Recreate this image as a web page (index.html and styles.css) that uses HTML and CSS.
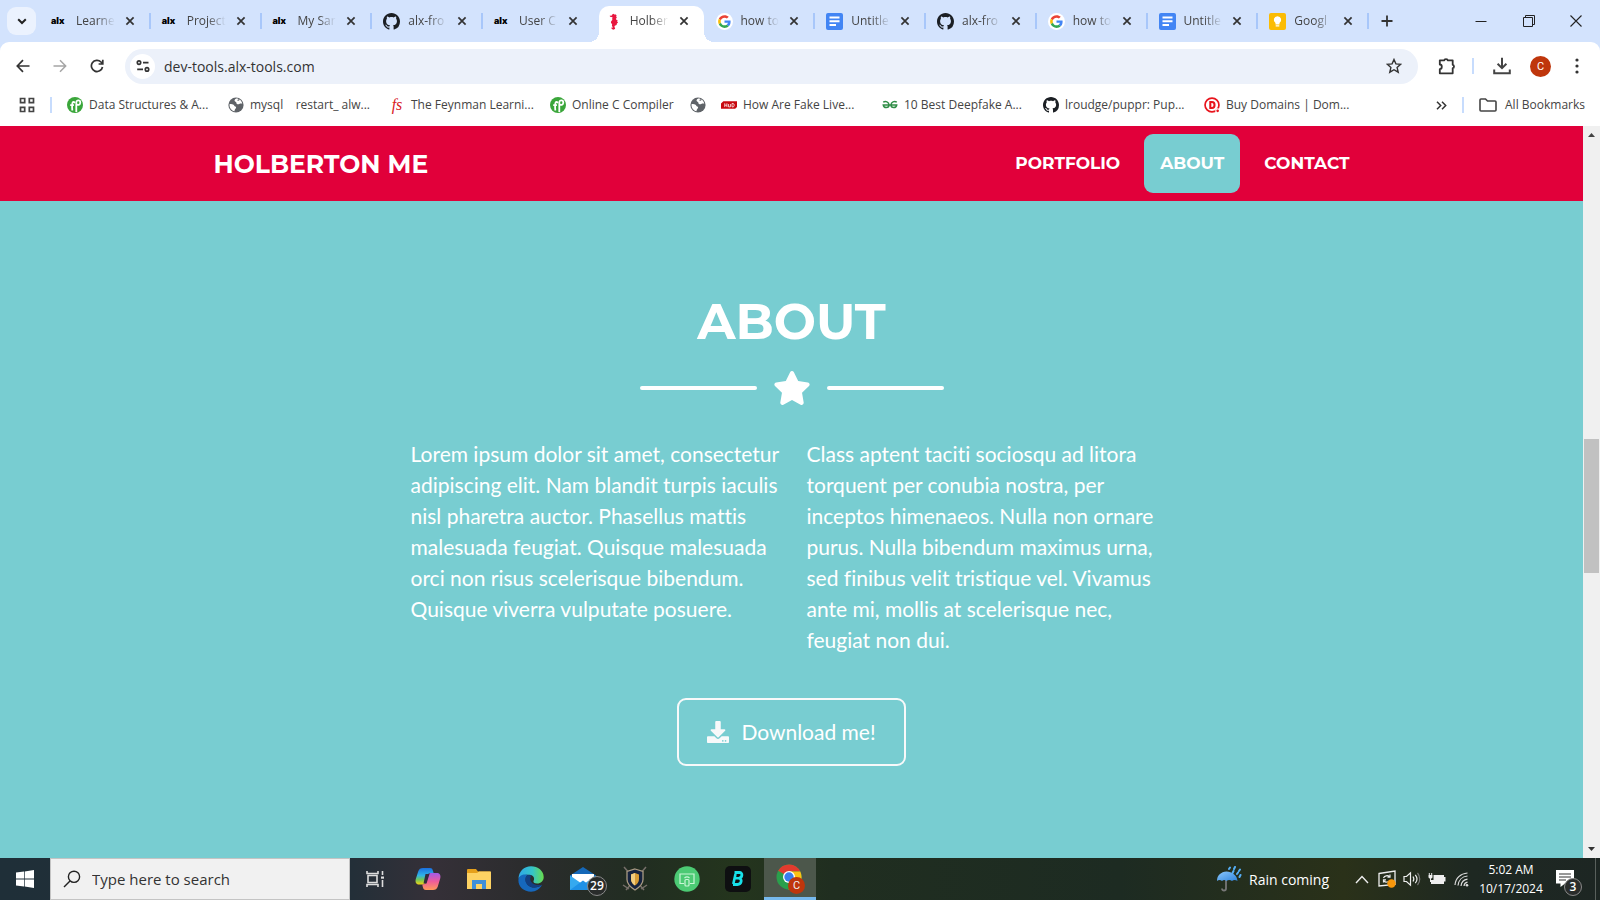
FILE: index.html
```html
<!DOCTYPE html>
<html lang="en">
<head>
<meta charset="utf-8">
<meta name="viewport" content="width=device-width, initial-scale=1">
<title>Holberton Me</title>
<link rel="stylesheet" href="styles.css">
</head>
<body>
<svg class="sprite" aria-hidden="true">
  <defs>
    <linearGradient id="g-cop1" x1="0" y1="0" x2="0" y2="1"><stop offset="0" stop-color="#1b6fe0"/><stop offset=".45" stop-color="#2fb3e8"/><stop offset=".7" stop-color="#6fc65a"/><stop offset="1" stop-color="#f2d313"/></linearGradient>
    <linearGradient id="g-cop2" x1="0" y1="0" x2="0" y2="1"><stop offset="0" stop-color="#a25be8"/><stop offset=".5" stop-color="#ee5c9a"/><stop offset="1" stop-color="#ff9a5a"/></linearGradient>
    <linearGradient id="g-edge" x1="0" y1="0" x2="1" y2="0"><stop offset="0" stop-color="#2fa8e8"/><stop offset=".55" stop-color="#35c4c9"/><stop offset="1" stop-color="#68dc4c"/></linearGradient>
    <linearGradient id="g-umb" x1="0" y1="0" x2="1" y2="1"><stop offset="0" stop-color="#8cc8fb"/><stop offset="1" stop-color="#2f84dc"/></linearGradient>
  </defs>
  <symbol id="i-close" viewBox="0 0 10 10"><path d="M1.4 1.4l7.2 7.2M8.6 1.4L1.4 8.6" fill="none" stroke="#333" stroke-width="1.7"/></symbol>
  <symbol id="i-github" viewBox="0 0 16 16"><path fill="#1b1f24" d="M8 0C3.58 0 0 3.58 0 8c0 3.54 2.29 6.53 5.47 7.59.4.07.55-.17.55-.38 0-.19-.01-.82-.01-1.49-2.01.37-2.53-.49-2.69-.94-.09-.23-.48-.94-.82-1.13-.28-.15-.68-.52-.01-.53.63-.01 1.08.58 1.23.82.72 1.21 1.87.87 2.33.66.07-.52.28-.87.51-1.07-1.78-.2-3.64-.89-3.64-3.95 0-.87.31-1.59.82-2.15-.08-.2-.36-1.02.08-2.12 0 0 .67-.21 2.2.82.64-.18 1.32-.27 2-.27s1.36.09 2 .27c1.53-1.04 2.2-.82 2.2-.82.44 1.1.16 1.92.08 2.12.51.56.82 1.27.82 2.15 0 3.07-1.87 3.75-3.65 3.95.29.25.54.73.54 1.48 0 1.07-.01 1.93-.01 2.2 0 .21.15.46.55.38A8.01 8.01 0 0 0 16 8c0-4.42-3.58-8-8-8z"/></symbol>
  <symbol id="i-google" viewBox="0 0 64 64"><circle cx="32" cy="32" r="32" fill="#fff"/><g transform="translate(8 8)"><path fill="#EA4335" d="M24 9.5c3.54 0 6.71 1.22 9.21 3.6l6.85-6.85C35.9 2.38 30.47 0 24 0 14.62 0 6.51 5.38 2.56 13.22l7.98 6.19C12.43 13.72 17.74 9.5 24 9.5z"/><path fill="#4285F4" d="M46.98 24.55c0-1.57-.15-3.09-.38-4.55H24v9.02h12.94c-.58 2.96-2.26 5.48-4.78 7.18l7.73 6c4.51-4.18 7.09-10.36 7.09-17.65z"/><path fill="#FBBC05" d="M10.53 28.59c-.48-1.45-.76-2.99-.76-4.59s.27-3.14.76-4.59l-7.98-6.19C.92 16.46 0 20.12 0 24c0 3.88.92 7.54 2.56 10.78l7.97-6.19z"/><path fill="#34A853" d="M24 48c6.48 0 11.93-2.13 15.89-5.81l-7.73-6c-2.15 1.45-4.92 2.3-8.16 2.3-6.26 0-11.57-4.22-13.47-9.91l-7.98 6.19C6.51 42.62 14.62 48 24 48z"/></g></symbol>
  <symbol id="i-docs" viewBox="0 0 17 17"><rect width="17" height="17" rx="2" fill="#4285f4"/><path d="M3.5 4.5h10M3.5 8.2h10M3.5 12h6.5" stroke="#fff" stroke-width="1.9"/></symbol>
  <symbol id="i-keep" viewBox="0 0 17 17"><rect width="17" height="17" rx="2" fill="#fbbc04"/><path d="M8.5 3.2a3.7 3.7 0 0 0-2 6.8v1.5h4V10a3.7 3.7 0 0 0-2-6.8zM6.7 12.2h3.6v1.2H6.7z" fill="#fff"/></symbol>
  <symbol id="i-horse" viewBox="0 0 12 16"><path fill="#e8173f" d="M4.5 1.6L6 .6l.8.7 1.500.2.7 1.300-.6.6.8 1.100-1 .8.7 1.200 1.100.6-.6.9.9 1-1.100.9-.3 1.300-1.700.7-.4 1.200.8.9-.3 1.100-1.600.6-1.500-.8-.2-1.300 1 .3.3-.6-.8-1.200.2-1.500-1.100-1.400.2-1.500 1.100-1-.1-1.900.4-.8-2.400-.5-.4-.9 2.200-.3z"/></symbol>
  <symbol id="i-globe" viewBox="0 0 16 16"><circle cx="8" cy="8" r="7.6" fill="#5f6368"/><path d="M1.500 7.200c2.300-.6 4.300.2 4.800 1.600.3 1 1.700.5 1.800 1.700 0 1.300-1.400 1-1.600 3.800C3.700 13.700 1.300 11 1.500 7.200zM8.200 1.600c-1.900.8-2.300 2.600-.7 3.200 1.500.5.3 2.200 1.900 2.500 1.500.3 2.400-1.200 4.800-.6-.3-2.700-2.800-5.100-6-5.100z" fill="#fff"/><path d="M9.600 3.600l1.800-1M9 11.500l2-1.300 1.300 1.200" stroke="#5f6368" stroke-width="1.200" fill="none"/></symbol>
  <symbol id="i-pro" viewBox="0 0 16 16"><circle cx="8" cy="8" r="8" fill="#3aa63a"/><path d="M5.300 13.500c-.3-3-.1-6 .1-7.300.3-2 2.500-1.500 1.700-.1M3.200 8.200h3.700M9.300 15V5.300c0-2.600 4-2.600 4 .2 0 2.500-2.600 3-4 1.800" fill="none" stroke="#fff" stroke-width="1.800"/></symbol>
  <symbol id="i-hud" viewBox="0 0 17 10"><path d="M2.500 1H17v6l-2 2H0V3.500z" fill="#c8090f"/><path d="M4 3.200v4M4 5.200h2.300M6.300 3.200v4M8 4v3h2V4M11.700 3.400v3.600h1.200c1.500 0 1.500-3.600 0-3.600z" fill="none" stroke="#fff" stroke-width=".8"/></symbol>
  <symbol id="i-gfg" viewBox="0 0 16 9"><path d="M1.200 1.700C3.500.5 7 1.200 7 4.500S1.800 8 1.300 4.600H14.700C14.200 8 9 7.800 9 4.500S12.500.5 14.800 1.700" fill="none" stroke="#2f8d46" stroke-width="1.500"/></symbol>
  <symbol id="i-dom" viewBox="0 0 17 17"><circle cx="8.500" cy="8.500" r="7.400" fill="none" stroke="#e8141c" stroke-width="1.800"/><path d="M6.700 5.300h1.800c3.600 0 3.600 6.400 0 6.400H6.700z" fill="none" stroke="#e8141c" stroke-width="2.200"/><circle cx="14.500" cy="14.500" r="2.600" fill="#fff"/><circle cx="14.500" cy="14.700" r="1.400" fill="#e8141c"/></symbol>
</svg>

<header class="browser">
  <div class="tabstrip">
    <button class="tab-search" aria-label="Search tabs"><svg width="10" height="7" viewBox="0 0 10 7"><path d="M1.200 1.300L5 5l3.800-3.700" fill="none" stroke="#222" stroke-width="2"/></svg></button>
    <div class="tabs">
      <div class="tab"><span class="fav alx">alx</span><span class="tab-title">Learne</span><button class="tab-close" aria-label="Close"><svg><use href="#i-close"/></svg></button></div>
      <div class="tab"><span class="fav alx">alx</span><span class="tab-title">Project</span><button class="tab-close" aria-label="Close"><svg><use href="#i-close"/></svg></button></div>
      <div class="tab"><span class="fav alx">alx</span><span class="tab-title">My Sar</span><button class="tab-close" aria-label="Close"><svg><use href="#i-close"/></svg></button></div>
      <div class="tab"><svg class="fav"><use href="#i-github"/></svg><span class="tab-title">alx-fro</span><button class="tab-close" aria-label="Close"><svg><use href="#i-close"/></svg></button></div>
      <div class="tab no-sep"><span class="fav alx">alx</span><span class="tab-title">User C</span><button class="tab-close" aria-label="Close"><svg><use href="#i-close"/></svg></button></div>
      <div class="tab active no-sep"><svg class="fav"><use href="#i-horse"/></svg><span class="tab-title">Holber</span><button class="tab-close" aria-label="Close"><svg><use href="#i-close"/></svg></button></div>
      <div class="tab"><svg class="fav"><use href="#i-google"/></svg><span class="tab-title">how to</span><button class="tab-close" aria-label="Close"><svg><use href="#i-close"/></svg></button></div>
      <div class="tab"><svg class="fav"><use href="#i-docs"/></svg><span class="tab-title">Untitle</span><button class="tab-close" aria-label="Close"><svg><use href="#i-close"/></svg></button></div>
      <div class="tab"><svg class="fav"><use href="#i-github"/></svg><span class="tab-title">alx-fro</span><button class="tab-close" aria-label="Close"><svg><use href="#i-close"/></svg></button></div>
      <div class="tab"><svg class="fav"><use href="#i-google"/></svg><span class="tab-title">how to</span><button class="tab-close" aria-label="Close"><svg><use href="#i-close"/></svg></button></div>
      <div class="tab"><svg class="fav"><use href="#i-docs"/></svg><span class="tab-title">Untitle</span><button class="tab-close" aria-label="Close"><svg><use href="#i-close"/></svg></button></div>
      <div class="tab"><svg class="fav"><use href="#i-keep"/></svg><span class="tab-title">Googl</span><button class="tab-close" aria-label="Close"><svg><use href="#i-close"/></svg></button></div>
    </div>
    <button class="new-tab" aria-label="New tab"><svg width="12" height="12" viewBox="0 0 12 12"><path d="M6 .5v11M.5 6h11" stroke="#333" stroke-width="1.800"/></svg></button>
    <div class="window-controls">
      <button aria-label="Minimize"><svg width="12" height="12" viewBox="0 0 12 12"><path d="M.5 6.500h11" stroke="#222" stroke-width="1"/></svg></button>
      <button aria-label="Restore"><svg width="12" height="12" viewBox="0 0 12 12"><path d="M.5 2.500h9v9h-9zM2.500 2.500v-2h9v9h-2" fill="none" stroke="#222" stroke-width="1"/></svg></button>
      <button aria-label="Close window"><svg width="12" height="12" viewBox="0 0 12 12"><path d="M.5.5l11 11M11.500.5l-11 11" stroke="#222" stroke-width="1.100"/></svg></button>
    </div>
  </div>

  <div class="toolbar">
    <div class="nav-buttons">
      <button aria-label="Back"><svg width="14" height="14" viewBox="0 0 14 14"><path d="M13.500 7H1.500M7 1.200L1.300 7 7 12.800" fill="none" stroke="#333" stroke-width="1.700"/></svg></button>
      <button aria-label="Forward"><svg width="14" height="14" viewBox="0 0 14 14"><path d="M.5 7h12M7 1.200L12.700 7 7 12.800" fill="none" stroke="#a5a5a5" stroke-width="1.500"/></svg></button>
      <button aria-label="Reload"><svg width="14" height="14" viewBox="0 0 14 14"><path d="M12.500 8A5.600 5.600 0 1 1 11 3l1.500 1.600M12.800.8v4.200H8.600" fill="none" stroke="#333" stroke-width="1.700"/></svg></button>
    </div>
    <div class="omnibox">
      <button class="site-info" aria-label="Site information"><svg width="14" height="12" viewBox="0 0 14 12"><g fill="none" stroke="#333" stroke-width="1.700"><circle cx="3" cy="2.600" r="1.700"/><path d="M7 2.600h5.500M1.200 9.400H7"/><circle cx="11" cy="9.400" r="1.700"/></g></svg></button>
      <input class="address" type="text" value="dev-tools.alx-tools.com" aria-label="Address">
      <button class="bare" aria-label="Bookmark this tab"><svg width="16" height="16" viewBox="0 0 16 16"><path d="M8 1.500l1.900 4.400 4.800.4-3.600 3.200 1.100 4.700L8 11.700l-4.200 2.500 1.100-4.700-3.600-3.200 4.800-.4z" fill="none" stroke="#333" stroke-width="1.400"/></svg></button>
    </div>
    <div class="toolbar-end">
      <button class="bare" aria-label="Extensions"><svg width="18" height="18" viewBox="0 0 18 18"><path d="M1.800 3.300h4.500a1.700 1.200 0 0 1 3.400 0h5v4.500a1.300 1.700 0 0 1 0 3.400v5.100H1.800v-4.200a2 2.300 0 0 0 0-4.600z" fill="none" stroke="#333" stroke-width="1.800" stroke-linejoin="round"/></svg></button>
      <span class="divider-line"></span>
      <button class="bare" aria-label="Downloads"><svg width="18" height="18" viewBox="0 0 18 18"><path d="M9 .8v10M4.600 6.800L9 11.200l4.400-4.400M1.200 12.500v3.800h15.600v-3.800" fill="none" stroke="#444" stroke-width="2"/></svg></button>
      <button class="avatar" aria-label="Profile">C</button>
      <button class="bare" aria-label="Menu"><svg width="4" height="16" viewBox="0 0 4 16"><g fill="#333"><circle cx="2" cy="2" r="1.600"/><circle cx="2" cy="8" r="1.600"/><circle cx="2" cy="14" r="1.600"/></g></svg></button>
    </div>
  </div>

  <nav class="bookmarks" aria-label="Bookmarks">
    <button class="bare apps" aria-label="Apps"><svg width="16" height="16" viewBox="0 0 16 16"><path d="M1.500 1.500h4.200v4.200H1.500zM10.300 1.500h4.200v4.200h-4.200zM1.500 10.300h4.200v4.200H1.500zM10.300 10.300h4.200v4.200h-4.200z" fill="none" stroke="#444" stroke-width="1.700"/></svg></button>
    <span class="divider-line"></span>
    <div class="bookmark-list">
      <a class="bookmark" href="#"><svg><use href="#i-pro"/></svg>Data Structures &amp; A...</a>
      <a class="bookmark" href="#"><svg><use href="#i-globe"/></svg><span class="pre">mysql    restart_ alw...</span></a>
      <a class="bookmark" href="#"><span class="fs">fs</span>The Feynman Learni...</a>
      <a class="bookmark medium" href="#"><svg><use href="#i-pro"/></svg>Online C Compiler</a>
      <a class="bookmark tiny" href="#" aria-label="Bookmark"><svg><use href="#i-globe"/></svg></a>
      <a class="bookmark" href="#"><svg><use href="#i-hud"/></svg>How Are Fake Live...</a>
      <a class="bookmark" href="#"><svg><use href="#i-gfg"/></svg>10 Best Deepfake A...</a>
      <a class="bookmark" href="#"><svg><use href="#i-github"/></svg>lroudge/puppr: Pup...</a>
      <a class="bookmark" href="#"><svg><use href="#i-dom"/></svg>Buy Domains | Dom...</a>
    </div>
    <button class="bare" aria-label="More bookmarks"><svg width="11" height="9" viewBox="0 0 11 9"><path d="M1 .8l3.700 3.700L1 8.200M6 .8l3.700 3.700L6 8.200" fill="none" stroke="#333" stroke-width="1.500"/></svg></button>
    <span class="divider-line"></span>
    <a class="all-bookmarks" href="#"><svg width="18" height="14" viewBox="0 0 18 14"><path d="M1 2a1 1 0 0 1 1-1h4.500l2 2H16a1 1 0 0 1 1 1v8a1 1 0 0 1-1 1H2a1 1 0 0 1-1-1z" fill="none" stroke="#444" stroke-width="1.600"/></svg>All Bookmarks</a>
  </nav>
</header>

<div class="viewport">
  <div class="page">
    <nav class="site-nav">
      <div class="site-nav-inner">
        <a class="brand" href="#">HOLBERTON ME</a>
        <div class="site-links">
          <a href="#">PORTFOLIO</a>
          <a class="current" href="#">ABOUT</a>
          <a href="#">CONTACT</a>
        </div>
      </div>
    </nav>
    <main class="about">
      <h1>ABOUT</h1>
      <div class="star-divider"><span></span><svg width="38" height="34" viewBox="0 0 576 512"><path fill="#fff" d="M259.300 17.800L194 150.200 47.900 171.500c-26.200 3.800-36.700 36.100-17.700 54.600l105.700 103-25 145.500c-4.500 26.300 23.200 46 46.400 33.700L288 439.600l130.700 68.700c23.200 12.200 50.900-7.400 46.400-33.700l-25-145.500 105.700-103c19-18.500 8.500-50.800-17.700-54.600L382 150.200 316.700 17.800c-11.700-23.600-45.600-23.900-57.400 0z"/></svg><span></span></div>
      <div class="columns">
        <p>Lorem ipsum dolor sit amet, consectetur adipiscing elit. Nam blandit turpis iaculis nisl pharetra auctor. Phasellus mattis malesuada feugiat. Quisque malesuada orci non risus scelerisque bibendum. Quisque viverra vulputate posuere.</p>
        <p>Class aptent taciti sociosqu ad litora torquent per conubia nostra, per inceptos himenaeos. Nulla non ornare purus. Nulla bibendum maximus urna, sed finibus velit tristique vel. Vivamus ante mi, mollis at scelerisque nec, feugiat non dui.</p>
      </div>
      <a class="download" href="#"><svg width="22" height="22" viewBox="0 0 512 512"><path fill="#f8f9fa" d="M216 0h80c13.300 0 24 10.700 24 24v168h87.700c17.800 0 26.700 21.500 14.100 34.100L269.700 378.300c-7.500 7.500-19.800 7.500-27.300 0L90.100 226.100c-12.600-12.600-3.700-34.100 14.100-34.100H192V24c0-13.300 10.700-24 24-24zm296 376v112c0 13.300-10.700 24-24 24H24c-13.300 0-24-10.700-24-24V376c0-13.300 10.700-24 24-24h146.700l49 49c20.100 20.100 52.500 20.100 72.600 0l49-49H488c13.300 0 24 10.700 24 24zm-124 88c0-11-9-20-20-20s-20 9-20 20 9 20 20 20 20-9 20-20zm64 0c0-11-9-20-20-20s-20 9-20 20 9 20 20 20 20-9 20-20z"/></svg>Download me!</a>
    </main>
  </div>
  <div class="scrollbar" aria-hidden="true">
    <svg width="17" height="17" viewBox="0 0 17 17"><path d="M5 11l3.500-4 3.500 4z" fill="#444"/></svg>
    <div class="track"><i class="before"></i><i class="thumb"></i><i class="after"></i></div>
    <svg width="17" height="17" viewBox="0 0 17 17"><path d="M5 6l3.500 4L12 6z" fill="#333"/></svg>
  </div>
</div>

<footer class="taskbar">
  <button class="start" aria-label="Start"><svg width="18" height="18" viewBox="0 0 18 18"><path fill="#fff" d="M0 2.600l8-1.100v7.100H0zM8.700 1.400L18 0v8.600H8.700zM0 9.400h8v7.100l-8-1.100zM8.700 9.400H18V18l-9.300-1.400z"/></svg></button>
  <label class="search"><svg width="18" height="18" viewBox="0 0 18 18"><g fill="none" stroke="#222" stroke-width="1.400"><circle cx="11" cy="6.800" r="5.600"/><path d="M7 10.900L1 17"/></g></svg><input type="text" placeholder="Type here to search" aria-label="Search"></label>
  <div class="apps-row">
    <button aria-label="Task view"><svg width="19" height="18" viewBox="0 0 19 18"><path d="M1 1v2.500h11V1M1 17v-2.500h11V17M2 5.500h9v7H2zM16.500 1v4M16.500 10v7" fill="none" stroke="#ddd" stroke-width="1.600"/><path d="M15 6.500h3v2.200h-3z" fill="#ddd"/></svg></button>
    <button aria-label="Copilot"><svg width="26" height="24" viewBox="0 0 26 24"><path d="M8 1h7c2 0 2.500 1 3 3l.6 2h-3c-2 0-2.700 1-3.200 3l-1.900 6.500C10 17 9 17.500 7.500 17.500H4C1 17.500 0 15 .8 12L3.200 4.500C4 2 5.500 1 8 1z" fill="url(#g-cop1)"/><path d="M18 23h-7c-2 0-2.700-1-3.200-3l-.5-2.400c2 0 3.500-.6 4.200-3l1.900-6.200C14 6.500 15 6 16.500 6H22c3 0 4 2.500 3.200 5.500l-2.400 8C22 22 20.500 23 18 23z" fill="url(#g-cop2)"/><path d="M10.500 7h4l-3 9.500h-3z" fill="#342c3c"/></svg></button>
    <button aria-label="File Explorer"><svg width="24" height="22" viewBox="0 0 24 22"><path d="M0 2a1 1 0 0 1 1-1h8l2 2.500h12V20H0z" fill="#e5a01b"/><path d="M0 5h10l2-1.500h12V21H0z" fill="#fdd263"/><path d="M5 21v-9h14v9h-4v-5H9v5z" fill="#3f8fd8"/></svg></button>
    <button aria-label="Edge"><svg width="26" height="26" viewBox="0 0 26 26"><path d="M.5 13C.5 5.500 6 .3 13 .3S25.700 5 25.700 11c0 4-3 6.500-6.500 6.500-3 0-4.200-1.500-3.700-2.500 1.500-2.500.2-6-4-6.300C6 8.500 1.500 10 .5 13z" fill="url(#g-edge)"/><path d="M.4 14C1 9 6 7.800 9.500 9 6 12 7.500 19 13 21c4 1.300 8 .2 11-2.200C22 23 18 25.700 13 25.700 6 25.700.2 21 .4 14z" fill="#1668bd"/><path d="M9.500 9c-4 3-2.500 10 3.500 12 4 1.300 8 .2 11-2.200-4 .8-9 .2-11-3.300-1.200-2-.8-4.500.5-5.700-1-.8-2.500-1.100-4-.8z" fill="#123f82"/></svg></button>
    <button class="mail" aria-label="Mail"><svg width="26" height="24" viewBox="0 0 26 24"><path d="M0 8.500L13 0l13 8.500V23H0z" fill="#1568b8"/><path d="M2 7h22v6l-11 5L2 12z" fill="#fff"/><path d="M0 8.500l13 9 13-9V23H0z" fill="#35a9ef"/><path d="M0 23l13-9.500L26 23z" fill="#1e91e6"/></svg><span class="count">29</span></button>
    <button aria-label="Shield"><svg width="26" height="26" viewBox="0 0 26 26"><path d="M2 1l20 23M24 1L4 24M1 19l6 4M25 19l-6 4" stroke="#77706a" stroke-width="1.500"/><path d="M13 3l8 2.500v8c0 5-4 8-8 10.500-4-2.500-8-5.500-8-10.500v-8z" fill="#16233f" stroke="#a99a83" stroke-width="1.300"/><path d="M13 7l4 1.500V13c0 3-1.500 5-4 6.500-2.500-1.500-4-3.500-4-6.500V8.500z" fill="#d79c36"/><path d="M13 7v12.500c-2.500-1.500-4-3.500-4-6.500V8.500z" fill="#f2cd7f"/></svg></button>
    <button aria-label="Screen share"><svg width="26" height="26" viewBox="0 0 26 26"><circle cx="13" cy="13" r="12.700" fill="#4cca74"/><g fill="none" stroke="#c9f6d6" stroke-width="1.200"><path d="M10 17.500H6V8h14v9.500h-4"/><rect x="11" y="13.500" width="4" height="6.500" rx="1"/><path d="M10.500 12c1.500-1.300 3.500-1.300 5 0"/></g></svg></button>
    <button aria-label="B app"><svg width="26" height="26" viewBox="0 0 26 26"><rect width="26" height="26" rx="5" fill="#0e0f11"/><path d="M9.500 6.500h5c3.500 0 3 5-.5 5.700 3.500.6 2.700 6.300-1.500 6.300H8" fill="none" stroke="#18e0ea" stroke-width="2.800"/><path d="M10.500 8L8.300 18M9 12.200h5" fill="none" stroke="#18e0ea" stroke-width="2.600"/></svg></button>
    <button class="running" aria-label="Chrome"><svg width="28" height="28" viewBox="0 0 28 28"><circle cx="13" cy="13" r="12.500" fill="#2a9f4c"/><path d="M13 13L2.200 6.700A12.500 12.500 0 0 1 24.300 7.500H13z" fill="#e33b2e"/><path d="M13 7.500h11.300A12.500 12.500 0 0 1 12.500 25.500L18 16z" fill="#fbc116"/><circle cx="13" cy="13" r="6" fill="#fff"/><circle cx="13" cy="13" r="4.700" fill="#3a7ded"/></svg><span class="profile">C</span></button>
  </div>
  <div class="tray">
    <button class="weather"><svg width="25" height="26" viewBox="0 0 25 26"><path d="M9 14v8.500c0 2.700-4 2.700-4 0" fill="none" stroke="#777" stroke-width="1.800"/><path d="M0 15C0 9 4 6 9.500 5.500 15 6 20 9 20.500 15c-2-1.500-4-1.500-5.500 0-1.500-1.500-4-1.500-5.500 0-1.500-1.500-3-1.500-4.500 0-1.500-1.500-3.500-1.500-5 0z" fill="url(#g-umb)"/><path d="M12 3l1-1.500M17 3l1-2M22 5l1-1.500M15.500 7l1-2M20 8l1-1.500M22.500 11l1-2" stroke="#55aef5" stroke-width="2" stroke-linecap="round"/></svg>Rain coming</button>
    <button aria-label="Show hidden icons"><svg width="14" height="9" viewBox="0 0 14 9"><path d="M1 8l6-6.500L13 8" fill="none" stroke="#eee" stroke-width="1.400"/></svg></button>
    <button aria-label="Updates"><svg width="18" height="18" viewBox="0 0 18 18"><path d="M1 3.500L17 1v13.500L1 16z" fill="none" stroke="#eee" stroke-width="1.300"/><path d="M5.500 8c1-2.500 4.500-3 6-1.200M12 4.500v2.600H9.500M5.500 12.500V9.900H8M6 11c1 1.200 2.500 1.500 4 .8" fill="none" stroke="#eee" stroke-width="1.200"/><circle cx="13.500" cy="13.500" r="4.200" fill="#f8970b"/></svg></button>
    <button aria-label="Volume"><svg width="18" height="16" viewBox="0 0 18 16"><path d="M1 5.500h2.500l4-3.700v12.400l-4-3.700H1zM10 5.500c1 1.500 1 3.500 0 5M12.300 3.800c2 2.500 2 6 0 8.400" fill="none" stroke="#eee" stroke-width="1.200"/><path d="M14.500 2c3 3.500 3 8.500 0 12" fill="none" stroke="#777" stroke-width="1.200"/></svg></button>
    <button aria-label="Battery"><svg width="18" height="14" viewBox="0 0 18 14"><path d="M5.500 3H16v2h1.500v4.500H16V12H3V8h2.500z" fill="#eee"/><path d="M1.300 1v2M3.700 1v2M2.500 7v3" stroke="#eee" stroke-width="1" fill="none"/><path d="M.5 3h4v2.500L2.500 7.200.5 5.500z" fill="#eee"/></svg></button>
    <button aria-label="Network"><svg width="15" height="15" viewBox="0 0 15 15"><g fill="none" stroke="#ddd" stroke-width="1.200"><path d="M1 13C1.500 6 6.500 1.500 13.500 1"/><path d="M4 13.500c.5-5 4-9 9.500-9.500M7 14c.4-3.500 3-6.300 6.500-6.800M10 14c.3-2 1.500-3.500 3.500-3.800"/></g><circle cx="13" cy="13.300" r="1.300" fill="#ddd"/></svg></button>
    <div class="clock"><time>5:02 AM</time><time>10/17/2024</time></div>
    <button class="notice" aria-label="Notifications"><svg width="18" height="18" viewBox="0 0 18 18"><path d="M0 0h18v13.500H9L4.500 17v-3.500H0z" fill="#fff"/><path d="M3 4h12M3 7h12M3 10h7" stroke="#333" stroke-width="1.100"/></svg><span class="count">3</span></button>
  </div>
</footer>
</body>
</html>
```
FILE: styles.css
```css
* { box-sizing: border-box; }
body {
  margin: 0;
  height: 100vh;
  display: flex;
  flex-direction: column;
  font-family: "Segoe UI", "Open Sans", "Noto Sans", sans-serif;
  font-size: 12px;
  color: #444;
  overflow: hidden;
}
button {
  font: inherit;
  color: inherit;
  background: none;
  border: 0;
  padding: 0;
  display: flex;
  align-items: center;
  justify-content: center;
}
a { color: inherit; text-decoration: none; }
input { font: inherit; color: inherit; border: 0; background: none; padding: 0; min-width: 0; flex: 1; }
svg { flex: none; display: block; }
.sprite { position: absolute; width: 0; height: 0; }

.browser { background: #d3e3fd; flex: none; }
.tabstrip { display: flex; height: 42px; }
.tab-search { width: 29px; height: 28px; margin: 7px 4px 0 7px; border-radius: 9px; background: #ebf2fe; }
.tabs { display: flex; flex: 1; min-width: 0; }
.tab {
  flex: 1;
  min-width: 0;
  display: flex;
  align-items: center;
  padding: 0 16px 0 11px;
  position: relative;
}
.tab::after { content: ""; position: absolute; right: 0; top: 13px; width: 2px; height: 16px; background: #a8c7fa; }
.tab.no-sep::after { display: none; }
.tab .fav { width: 17px; height: 17px; flex: none; position: relative; }
.tab .alx { font: 900 9px/16px Inter, sans-serif; color: #000; }
.tab-title {
  flex: 1;
  overflow: hidden;
  white-space: nowrap;
  margin: 0 8px;
  line-height: 20px;
  position: relative;
  mask-image: linear-gradient(90deg, #000 50%, transparent 95%);
}
.tab-close { width: 10px; height: 10px; position: relative; }
.tab-close svg { width: 10px; height: 10px; }
.tab.active::before {
  content: "";
  position: absolute;
  inset: 6px 1px 0 5px;
  background: #fff;
  border-radius: 10px 10px 0 0;
}
.tab.active::after {
  content: "";
  display: block;
  position: absolute;
  inset: auto -9px 0 -5px;
  width: auto;
  height: 10px;
  background:
    radial-gradient(circle at 0 0, transparent 10px, #fff 10px) left / 10px 10px no-repeat,
    radial-gradient(circle at 100% 0, transparent 10px, #fff 10px) right / 10px 10px no-repeat;
}
.new-tab { width: 36px; }
.window-controls { display: flex; width: 195px; padding-left: 52px; }
.window-controls button { flex: 1; }

.toolbar { display: flex; align-items: center; height: 48px; padding-right: 21px; background: #fff; border-radius: 9px 9px 0 0; }
.nav-buttons { display: flex; width: 125px; padding-left: 4px; }
.nav-buttons button { width: 37px; height: 30px; }
.omnibox {
  flex: 1;
  display: flex;
  align-items: center;
  gap: 9px;
  height: 35px;
  padding: 0 16px 0 5px;
  border-radius: 18px;
  background: #ecf1fa;
}
.site-info { width: 25px; height: 25px; border-radius: 50%; background: #fff; }
.address { font-size: 14px; height: 24px; color: #333; }
.toolbar-end { display: flex; align-items: center; gap: 19px; padding-left: 20px; }
.toolbar-end .divider-line { margin-left: -3px; }
.avatar { width: 21px; height: 21px; margin-right: 5px; border-radius: 50%; background: #bf360c; color: #fff; font: 11px Roboto, sans-serif; }
.divider-line { width: 2px; height: 16px; background: #c7dcfd; flex: none; }

.bookmarks { display: flex; align-items: center; height: 36px; padding: 0 15px 6px 19px; gap: 15px; background: #fff; }
.bookmark-list { display: flex; flex: 1; min-width: 0; }
.bookmark { display: flex; align-items: center; gap: 6px; width: 161px; line-height: 20px; white-space: nowrap; flex: none; }
.bookmark svg { width: 16px; height: 16px; }
.bookmark.medium { width: 140px; }
.bookmark.tiny { width: 31px; }
.pre { white-space: pre; }
.fs { width: 16px; text-align: center; font: italic 16px/16px "Liberation Serif", serif; color: #d8201f; }
.all-bookmarks { display: flex; align-items: center; gap: 8px; line-height: 20px; }

.viewport { flex: 1; display: flex; min-height: 0; }
.page { flex: 1; display: flex; flex-direction: column; background: #78cdd1; color: #fff; }
.site-nav { background: #e1003a; padding: 8px 24px; }
.site-nav-inner { max-width: 1156px; margin: 0 auto; display: flex; align-items: center; justify-content: space-between; }
.brand, .site-links, .about h1 { font-family: Montserrat, Inter, sans-serif; font-weight: 700; }
.brand { font-size: 25px; }
.site-links { display: flex; gap: 8px; margin-right: 4px; font-size: 17px; }
.site-links a { padding: 0 16px; line-height: 59px; border-radius: 9px; }
.site-links .current { background: #78cdd1; }
.about { flex: 1; display: flex; flex-direction: column; align-items: center; padding: 91px 24px 24px; font-family: Lato, sans-serif; }
.about h1 { margin: 0; font-size: 50px; line-height: 60px; }
.star-divider { display: flex; align-items: center; gap: 16px; margin: 19px 0 33px; }
.star-divider span { width: 117px; height: 4px; border-radius: 2px; background: #fff; }
.columns {
  display: grid;
  grid-template-columns: 1fr 1fr;
  gap: 26px;
  max-width: 770px;
  padding-left: 4px;
  font-size: 21px;
  line-height: 31px;
  font-variant-ligatures: none;
}
.columns p { margin: 0; }
.download {
  display: flex;
  align-items: center;
  gap: 12px;
  margin-top: 43px;
  padding: 0 28px;
  border: 2px solid #f8f9fa;
  border-radius: 9px;
  font-size: 21px;
  line-height: 64px;
}

.scrollbar { width: 17px; background: #f0f0f0; display: flex; flex-direction: column; }
.track { flex: 1; display: flex; flex-direction: column; padding: 0 1px; }
.before { flex: 296; }
.thumb { flex: 134; background: #c1c1c1; }
.after { flex: 268; }

.taskbar {
  display: flex;
  flex: none;
  height: 42px;
  color: #fff;
  background: linear-gradient(90deg, #1f2f38 0, #232f38 22%, #353038 27%, #2b2c2d 33%, #212d21 40%, #24351d 46%, #202e20 52%, #1d2b22 70%, #2a3119 84%, #1e2822 92%, #1d2623 100%);
}
.start { width: 50px; }
.search { width: 300px; display: flex; align-items: center; gap: 11px; padding: 0 12px; background: #f1f1f1; border: 1px solid #c4c4c4; }
.search input { font-size: 15px; height: 28px; color: #333; }
.search input::placeholder { color: #333; opacity: 1; }
.apps-row { display: flex; width: 466px; }
.apps-row button { flex: 1; position: relative; }
.apps-row .running { background: #4c574b; border-bottom: 3px solid #76b9ed; }
.count {
  position: absolute;
  right: 2px;
  bottom: 4px;
  width: 20px;
  height: 20px;
  border: 1px solid #8a8a8a;
  border-radius: 50%;
  background: #292c2b;
  font-size: 12px;
  font-weight: 600;
  line-height: 18px;
  text-align: center;
}
.profile {
  position: absolute;
  right: 11px;
  bottom: 3px;
  width: 17px;
  height: 17px;
  border-radius: 50%;
  background: #bf360c;
  color: #eee;
  font: 11px/17px Roboto, sans-serif;
}
.tray { display: flex; align-items: center; margin-left: auto; padding-right: 4px; }
.tray button { width: 25px; height: 42px; }
.tray .weather { width: auto; gap: 7px; margin-right: 20px; font-size: 14px; }
.clock { width: 74px; display: flex; flex-direction: column; align-items: center; font-size: 12px; line-height: 19px; }
.tray .notice { width: 48px; padding-right: 14px; position: relative; border-right: 1px solid #59605c; }
.notice .count { right: 13px; bottom: 4px; width: 18px; height: 18px; line-height: 16px; }
```
